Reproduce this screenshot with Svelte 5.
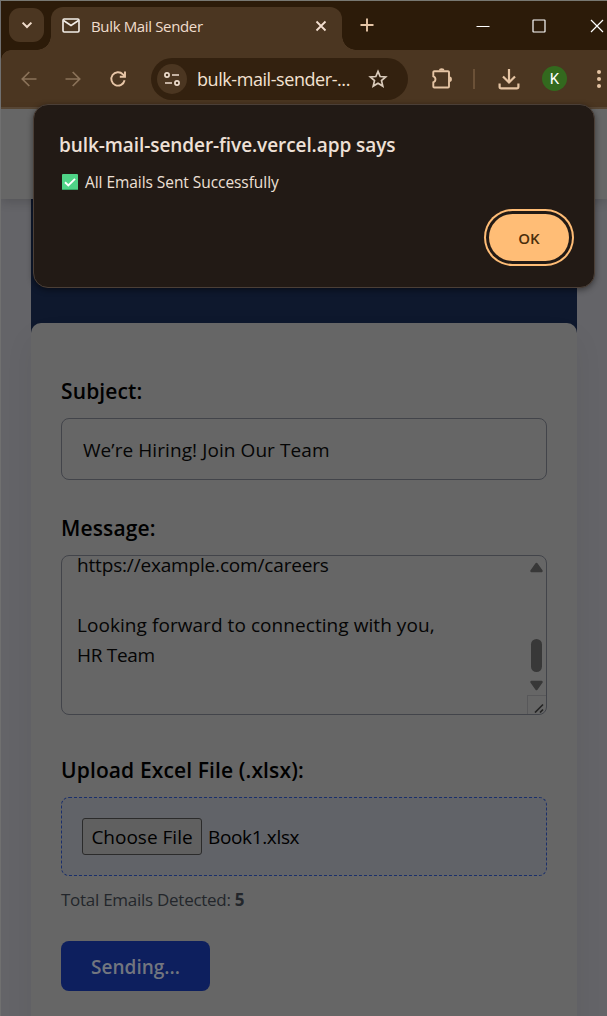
<script>
  const tabTitle = 'Bulk Mail Sender';
  const address = 'bulk-mail-sender-...';
  const subject = 'We’re Hiring! Join Our Team';
  const lines = [
    { text: 'https://example.com/careers', kind: 'link' },
    { text: '', kind: 'blank' },
    { text: 'Looking forward to connecting with you,', kind: 'closing' },
    { text: 'HR Team', kind: 'sign' }
  ];
  const total = 5;
</script>

<div class="window">
  <header class="tabs">
    <div class="search"><svg width="12" height="8" viewBox="0 0 12 8"><path d="M1.6 1.6 6 6l4.400-4.400" fill="none" stroke="#f0dccb" stroke-width="2" /></svg></div>
    <div class="tab">
      <svg class="mail" width="18" height="15" viewBox="0 0 18 15" fill="none" stroke="#f4efe9" stroke-width="1.600"><rect x="1" y="1" width="16" height="13" rx="1.200" /><path d="m1.500 2.500 7.500 5 7.500-5" /></svg>
      <span class="title">{tabTitle}</span>
      <svg class="close" width="12" height="12" viewBox="0 0 12 12" stroke="#f3dfd0" stroke-width="1.800"><path d="m1.500 1.500 9 9m0-9-9 9" /></svg>
    </div>
    <svg class="plus" width="14" height="14" viewBox="0 0 14 14" stroke="#e5c5a6" stroke-width="1.900"><path d="M7 .5v13M.5 7h13" /></svg>
    <div class="controls">
      <svg width="14" height="14" viewBox="0 0 14 14" stroke="#fff" fill="none"><path d="M.5 7.500h13" /></svg>
      <svg width="14" height="14" viewBox="0 0 14 14" stroke="#fff" fill="none"><rect x="1" y="1" width="12" height="12" rx=".5" stroke-width="1.200" /></svg>
      <svg width="14" height="14" viewBox="0 0 14 14" stroke="#fff" fill="none"><path d="m1 1 12 12M13 1 1 13" stroke-width="1.200" /></svg>
    </div>
  </header>

  <div class="toolbar">
    <svg class="back" width="16" height="16" viewBox="0 0 16 16" fill="none" stroke="#8b735a" stroke-width="1.700"><path d="M15.500 8H1.500M8.300 1 1.300 8l7 7" /></svg>
    <svg class="fwd" width="16" height="16" viewBox="0 0 16 16" fill="none" stroke="#8b735a" stroke-width="1.700"><path d="M.5 8h14M7.700 1l7 7-7 7" /></svg>
    <svg class="reload" width="18" height="18" viewBox="0 0 18 18" fill="none" stroke="#e8c6a7" stroke-width="1.900"><path d="M15.600 10.300A6.700 6.700 0 1 1 13.900 4.300L15.500 6" /><path d="M16 1.500V6.700H10.800" /></svg>
    <div class="omnibox">
      <div class="site"><svg width="16" height="14" viewBox="0 0 16 14" fill="none" stroke="#eddccd" stroke-width="1.700"><circle cx="3" cy="3" r="2.100" /><path d="M8 3h7M1 11h7" /><circle cx="13" cy="11" r="2.100" /></svg></div>
      <span class="url">{address}</span>
      <svg width="20" height="20" viewBox="0 0 20 20" fill="none" stroke="#dacbbb" stroke-width="1.700"><path d="m10 2.400 2.150 5.150 5.550.45-4.200 3.650 1.300 5.450L10 14.200l-4.800 2.900 1.300-5.450L2.300 8l5.550-.45Z" /></svg>
    </div>
    <svg class="puzzle" width="22" height="22" viewBox="0 0 22 22"><path d="M3.300 3.200H17a1 1 0 0 1 1 1V18.500a1 1 0 0 1-1 1H3.300a1 1 0 0 1-1-1V14.300a3.100 3.100 0 0 0 0-5.900V4.200a1 1 0 0 1 1-1Z" fill="none" stroke="#e5c4a3" stroke-width="1.900" /><path d="M8 2.500a2.700 2.300 0 0 1 5.400 0ZM18.500 8.500a2.400 2.700 0 0 1 0 5.400Z" fill="#e5c4a3" /></svg>
    <i class="divider"></i>
    <svg class="download" width="22" height="22" viewBox="0 0 22 22" fill="none" stroke="#e5c4a3" stroke-width="2.200"><path d="M11 1v13M5 8.500l6 6 6-6M1.600 15.500v3.300a1.600 1.600 0 0 0 1.600 1.600h15.600a1.600 1.600 0 0 0 1.600-1.600v-3.300" /></svg>
    <div class="avatar">K</div>
    <svg class="more" width="6" height="20" viewBox="0 0 6 20" fill="#e5c4a3"><circle cx="3" cy="3" r="2" /><circle cx="3" cy="10" r="2" /><circle cx="3" cy="17" r="2" /></svg>
  </div>

  <main>
    <nav></nav>
    <div class="content">
      <section class="hero"></section>
      <form class="card">
        <div class="label subj"><span>Subject:</span></div>
        <div class="input"><span>{subject}</span></div>
        <div class="label msg"><span>Message:</span></div>
        <div class="textarea">
          <div class="lines">
            {#each lines as line}<p class={line.kind}>{line.text}</p>{/each}
          </div>
          <div class="scroll">
            <svg width="13" height="11" viewBox="0 0 13 11"><path d="M1.500 9 6.500 2 11.500 9Z" fill="#383838" stroke="#383838" stroke-width="2.400" stroke-linejoin="round" /></svg>
            <i></i>
            <svg width="13" height="11" viewBox="0 0 13 11"><path d="M1.500 2 6.500 9 11.500 2Z" fill="#383838" stroke="#383838" stroke-width="2.400" stroke-linejoin="round" /></svg>
            <div class="grip"><svg width="10" height="10" viewBox="0 0 10 10" stroke="#242424" stroke-width="1.700"><path d="M1 9.500 9 1.500M6 9.500 9 6.500" /></svg></div>
          </div>
        </div>
        <div class="label file"><span>Upload Excel File (.xlsx):</span></div>
        <div class="upload"><span class="choose"><span>Choose File</span></span><span class="name">Book1.xlsx</span></div>
        <p class="total">Total Emails Detected: <b>{total}</b></p>
        <div class="send"><span>Sending...</span></div>
      </form>
    </div>
  </main>

  <div class="dialog">
    <h1>bulk-mail-sender-five.vercel.app says</h1>
    <p><svg width="16" height="16" viewBox="0 0 16 16"><rect width="16" height="16" rx="1" fill="#4fd487" /><path d="M0 15h16v1H0z" fill="#35a765" /><path d="m3 8.300 3.300 3.200L13 4.800" fill="none" stroke="#fff" stroke-width="1.900" /></svg><span>All Emails Sent Successfully</span></p>
    <div class="ok">OK</div>
  </div>
</div>

<style>
  :global(body) { margin: 0; background: #646468; }
  * { box-sizing: border-box; }
  svg { display: block; flex: none; }
  p, h1 { margin: 0; }
  span, b, h1 { white-space: nowrap; }
  .window { position: relative; width: 607px; height: 1016px; overflow: hidden; border-left: 1px solid #707070; border-top: 1px solid #787872; font-family: "Open Sans", "Noto Sans", sans-serif; background: #646468; }
  .tabs { display: flex; height: 49px; background: #2c1b09; }
  .search { position: relative; z-index: 1; width: 35px; height: 34px; margin: 7px 0 0 8px; border-radius: 11px; background: #4b3621; display: flex; align-items: center; justify-content: center; }
  .tab { position: relative; display: flex; align-items: center; width: 291px; height: 43px; margin: 6px 0 0 7px; padding: 0 15px 6px 11px; border-radius: 12px 12px 0 0; background: #4b3621; }
  .tab::before, .tab::after { content: ""; position: absolute; bottom: 0; width: 14px; height: 14px; }
  .tab::before { left: -14px; background: radial-gradient(circle at 0 0, #2c1b09 13.500px, #4b3621 14px); }
  .tab::after { right: -14px; background: radial-gradient(circle at 100% 0, #2c1b09 13.500px, #4b3621 14px); }
  .title { margin-left: 11px; font-size: 15px; letter-spacing: -0.350px; color: #f0ddcd; }
  .close { margin-left: auto; }
  .plus { margin: 17px 0 0 18px; }
  .controls { display: flex; gap: 42px; margin: 18px 0 0 102px; }
  .controls svg:last-child { margin-left: 2px; }
  .toolbar { display: flex; align-items: center; height: 59px; padding-bottom: 0; border-bottom: 2px solid #5a4937; background: radial-gradient(circle at 10px 10px, #4b3621 9.500px, #2c1b09 10px) 0 0 / 10px 10px no-repeat, linear-gradient(#4b3621, #4b3621) 10px 0 no-repeat, linear-gradient(#4b3621, #4b3621) 0 10px no-repeat; }
  .back { margin-left: 20px; }
  .fwd { margin-left: 28px; }
  .reload { margin-left: 28px; }
  .omnibox { display: flex; align-items: center; width: 257px; height: 42px; margin-left: 24px; padding: 0 20px 0 6px; border-radius: 21px; background: #33210f; }
  .site { display: flex; width: 30px; height: 30px; align-items: center; justify-content: center; border-radius: 50%; background: #4b3621; }
  .url { margin: 0 auto 0 10px; font-size: 18px; letter-spacing: -0.430px; color: #f4e2d2; }
  .puzzle { margin-left: 23px; }
  .divider { width: 2px; height: 20px; margin-left: 20px; background: #6b5137; }
  .download { margin-left: 23px; }
  .avatar { width: 25px; height: 25px; margin-left: 22px; border-radius: 50%; background: #33691e; color: #fff; font: 15px/26px Roboto, sans-serif; text-align: center; }
  .more { margin-left: 29px; }

  nav { position: relative; height: 90px; background: #666; box-shadow: 0 3px 10px rgba(0, 0, 0, 0.160); }
  .content { padding: 0 30px; }
  .hero { height: 136px; margin-bottom: -12px; background: #0e182d; }
  .card { position: relative; height: 720px; padding: 54px 30px 0; border-radius: 10px 10px 0 0; background: #666; box-shadow: 0 15px 30px rgba(0, 0, 0, 0.060); }
  .label { height: 28px; font-size: 21px; font-weight: 600; line-height: 28px; letter-spacing: 0.120px; color: #000; }
  .input { display: flex; align-items: center; height: 62px; margin-top: 13px; padding: 2px 20px 0 21px; border: 1px solid #42444a; border-radius: 8px; font-size: 19px; letter-spacing: 0.080px; color: #050505; }
  .msg { margin-top: 34px; }
  .textarea { display: flex; height: 160px; margin-top: 13px; border: 1px solid #42444a; border-radius: 8px; overflow: hidden; }
  .lines { flex: 1; padding-left: 15px; font-size: 19px; color: #050505; }
  .lines p { height: 30px; line-height: 30px; white-space: nowrap; }
  .lines .link { height: 24px; line-height: 18px; letter-spacing: -0.170px; }
  .lines .closing { letter-spacing: 0.060px; }
  .lines .sign { letter-spacing: -0.300px; }
  .scroll { display: flex; flex-direction: column; align-items: center; width: 19px; padding-top: 6px; }
  .scroll i { width: 11px; height: 33px; margin: 66px 0 8px; border-radius: 6px; background: #383838; }
  .grip { display: flex; align-items: flex-end; justify-content: flex-end; width: 19px; height: 19px; margin-top: auto; padding: 0 2px 1px 0; border: solid #58585a; border-width: 1px 0 0 1px; }
  .file { margin-top: 41px; }
  .upload { display: flex; align-items: center; height: 79px; margin-top: 13px; padding: 0 20px; border: 1px dashed #1a2f6b; border-radius: 8px; background: #616368; font-size: 19px; color: #000; }
  .choose { display: flex; align-items: center; justify-content: center; width: 120px; height: 37px; border: 1px solid #2b2b2b; border-radius: 3px; background: #606060; letter-spacing: 0; }
  .name { margin-left: 6px; letter-spacing: -0.350px; }
  .total { height: 24px; margin-top: 12px; font-size: 17px; line-height: 24px; letter-spacing: -0.270px; color: #23262b; }
  .send { display: flex; align-items: center; justify-content: center; width: 149px; height: 50px; margin-top: 29px; padding-top: 1px; border-radius: 8px; background: #0d1f5e; color: #72767f; font-size: 19px; font-weight: 600; letter-spacing: 0; }

  .dialog { position: absolute; left: 32px; top: 103px; width: 562px; height: 184px; padding: 26px 25px 0 25px; border: 1px solid #4b3f37; border-radius: 15px; background: #221a15; box-shadow: 0 2px 6px rgba(0, 0, 0, 0.450); color: #eee0d6; }
  .dialog h1 { height: 28px; font-size: 19px; font-weight: 600; line-height: 28px; letter-spacing: -0.080px; }
  .dialog p { display: flex; align-items: center; gap: 7px; height: 22px; margin-top: 12px; padding-left: 3px; font-size: 15.500px; letter-spacing: -0.060px; }
  .ok { width: 80px; height: 47px; margin: 21px 0 0 auto; border-radius: 24px; background: #ffbd76; box-shadow: 0 0 0 3px #221a15, 0 0 0 5px #ffbd76; color: #4a2e0b; font-size: 15px; font-weight: 600; line-height: 49px; text-align: center; }
</style>
